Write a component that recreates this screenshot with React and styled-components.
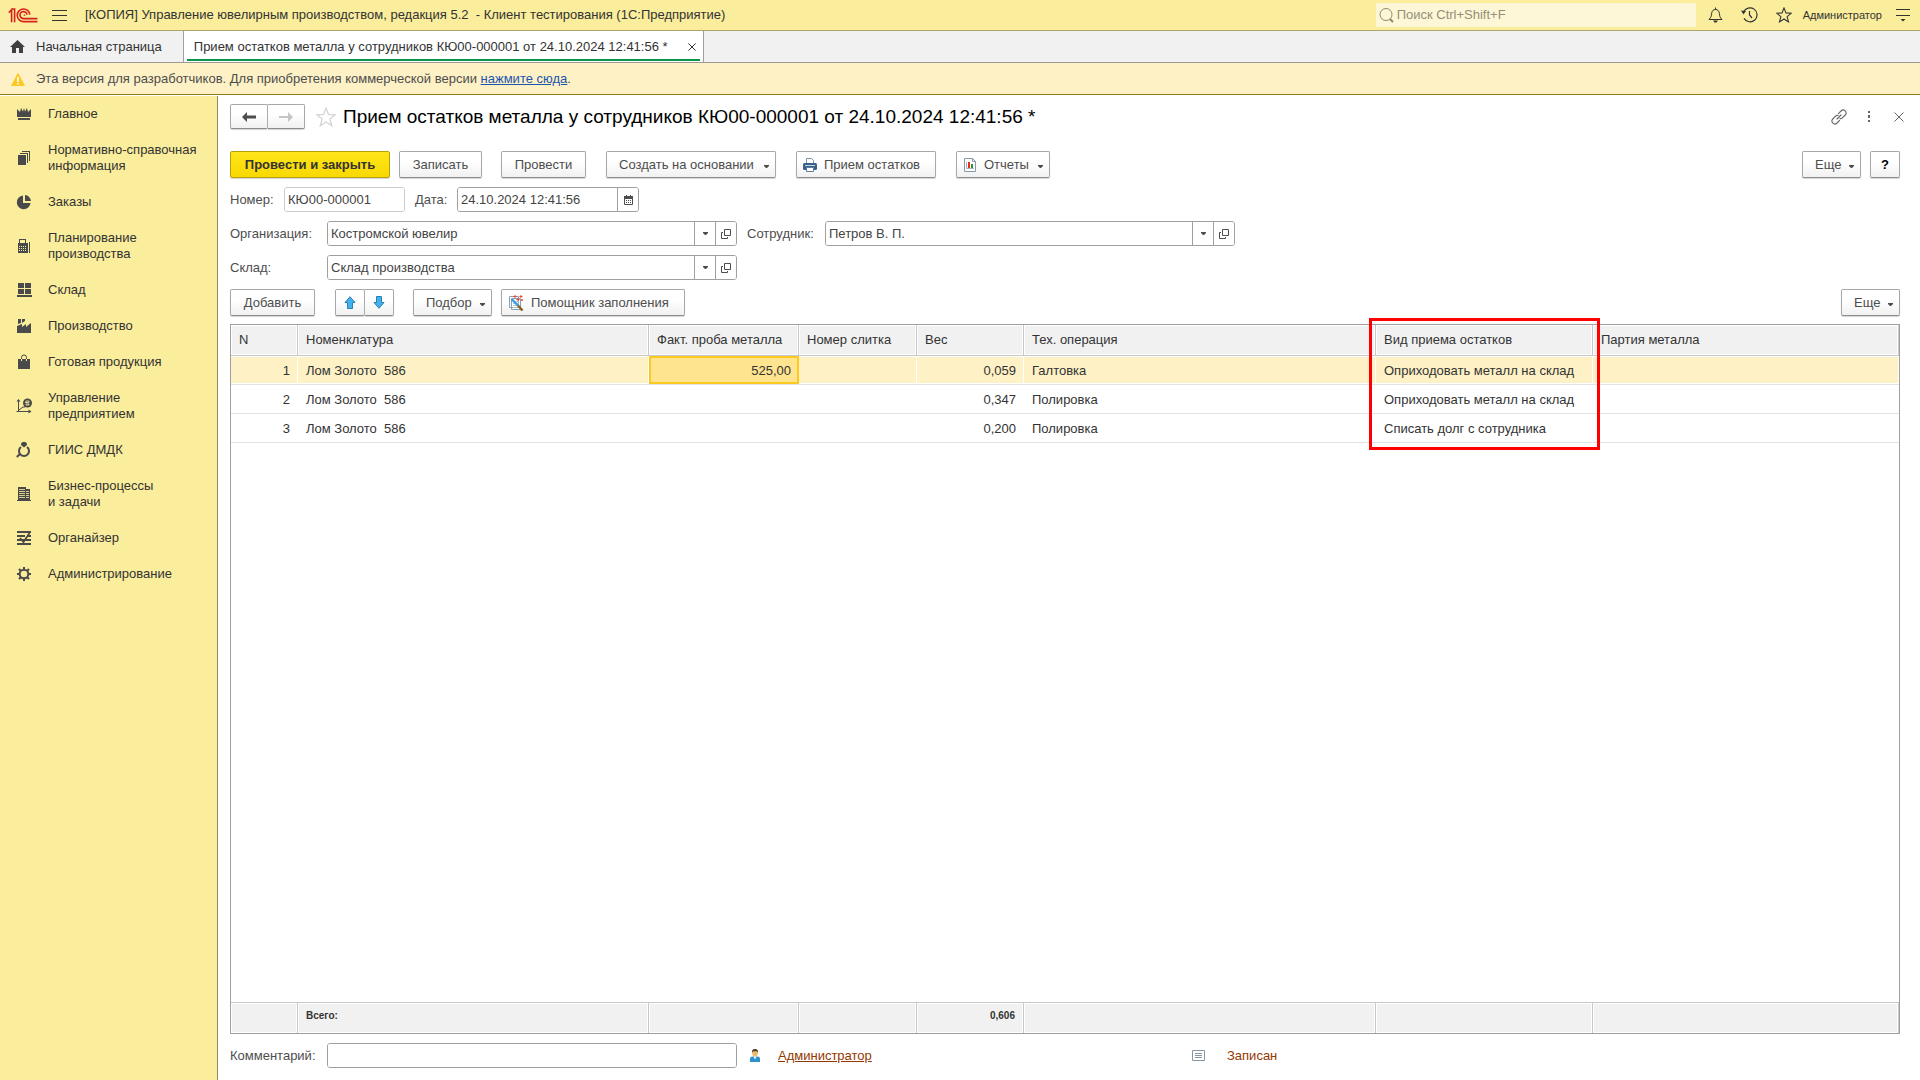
import React, { useState } from 'react';
import styled, { createGlobalStyle, css } from 'styled-components';


const GlobalStyle = createGlobalStyle`
    * {
        box-sizing: border-box;
    }
    body {
        margin: 0;
        background: #fff;
    }
    body, button, input {
        font-family: "Liberation Sans", Arial, sans-serif;
        font-size: 13px;
        line-height: 16px;
        color: #333;
    }
    svg {
        display: block;
        flex: none;
    }
`;

const Page = styled.div`
    display: flex;
    flex-direction: column;
    min-height: 100vh;
`;

const Header = styled.header`
    display: flex;
    align-items: center;
    height: 31px;
    padding: 0 4px 0 8px;
    background: #faed9c;
    border-bottom: 1px solid #aca46c;
`;

const IconButton = styled.button`
    display: flex;
    align-items: center;
    justify-content: center;
    width: ${props => props.$width || 34}px;
    height: 24px;
    padding: 0;
    border: 0;
    background: none;
    color: ${props => props.$color || '#333'};
    cursor: pointer;
`;

const AppTitle = styled.div`
    flex: 1;
    margin-left: 4px;
    white-space: pre;
`;

const Search = styled.label`
    display: flex;
    align-items: center;
    width: 320px;
    height: 24px;
    margin-right: 3px;
    padding-left: 3px;
    background: #fdf7d7;
    border-radius: 2px;
    color: #8f8a6c;
`;

const SearchInput = styled.input`
    flex: 1;
    min-width: 0;
    padding: 0 0 0 3px;
    border: 0;
    outline: 0;
    background: none;
    &::placeholder {
        color: #948f75;
        opacity: 1;
    }
`;

const UserName = styled.span`
    margin: 0 8px 0 2px;
    font-size: 11px;
`;

const Tabs = styled.nav`
    display: flex;
    height: 32px;
    background: #f1f1f1;
    border-bottom: 1px solid #9b9b93;
`;

const Tab = styled.div`
    display: flex;
    align-items: center;
    border-right: 1px solid #a0a0a0;
    ${props => props.$active ? css`
        padding: 0 3px;
        background: #fff;
    ` : css`
        padding: 0 21px 0 10px;
    `}
`;

const TabButton = styled.button`
    display: flex;
    align-items: center;
    gap: 11px;
    padding: 0;
    border: 0;
    background: none;
    cursor: pointer;
`;

const TabBody = styled.div`
    display: flex;
    align-items: center;
    gap: 16px;
    height: 29px;
    padding: 2px 0 0 7px;
    border-bottom: 2px solid #0a9649;
`;

const Notice = styled.div`
    display: flex;
    align-items: center;
    gap: 11px;
    height: 32px;
    padding-left: 11px;
    background: #fdf1c5;
    border-bottom: 1px solid #967d1a;
    color: #4d4d4d;
`;

const NoticeLink = styled.a`
    color: #1c55ae;
`;

const Workspace = styled.div`
    display: flex;
    flex: 1;
    padding-top: 1px;
`;

const Sidebar = styled.nav`
    width: 218px;
    flex: none;
    background: #faed9c;
    border-right: 1px solid #8f8a62;
`;

const MenuItem = styled.a`
    display: flex;
    align-items: center;
    gap: 16px;
    padding: 10px 0 10px 16px;
    color: #333;
    text-decoration: none;
    white-space: pre-line;
    &:hover {
        background: #fdf1c5;
    }
`;

const Form = styled.main`
    display: flex;
    flex: 1;
    flex-direction: column;
    min-width: 0;
    padding: 8px 20px 12px 12px;
`;

const TitleRow = styled.div`
    display: flex;
    align-items: center;
    height: 25px;
    margin: 0 -14px 22px 0;
`;

const Title = styled.h1`
    flex: 1;
    margin: 0;
    font-size: 19px;
    font-weight: 400;
    line-height: 24px;
    color: #000;
`;

const Toolbar = styled.div`
    display: flex;
    margin-bottom: ${props => props.$bottom}px;
`;

const Spacer = styled.div`
    flex: 1;
`;

const Button = styled.button`
    display: flex;
    align-items: center;
    justify-content: ${props => props.$menu || props.$icon ? 'flex-start' : 'center'};
    gap: 7px;
    height: 27px;
    min-width: ${props => props.$width || 30}px;
    margin-right: ${props => props.$gap || 0}px;
    padding: 0 6px 0 ${props => props.$menu && !props.$icon ? 12 : 6}px;
    background: linear-gradient(#fff 40%, #f1f1f1);
    border: 1px solid #a8a8a8;
    border-bottom-color: #8c8c8c;
    border-radius: 2px;
    box-shadow: 0 1px 1px #d5d5d5;
    color: #4d4d4d;
    white-space: nowrap;
    cursor: pointer;
    ${props => props.$primary && css`
        background: linear-gradient(#ffe61a, #f8d800);
        border-color: #b8a108;
        color: #333;
        font-weight: 700;
    `}
    ${props => props.$help && css`
        padding: 0;
        color: #000;
        font-weight: 700;
    `}
`;

const ButtonPair = styled.div`
    display: flex;
    margin-right: ${props => props.$gap}px;
    ${Button} {
        padding: 0;
        min-width: 0;
        width: ${props => props.$width}px;
        height: ${props => props.$height}px;
    }
    ${Button} + ${Button} {
        border-left: 0;
        border-radius: 0 2px 2px 0;
        width: ${props => props.$width - 1}px;
    }
`;

const FieldRow = styled.div`
    display: flex;
    align-items: center;
    margin-bottom: 9px;
`;

const Label = styled.label`
    flex: none;
    width: ${props => props.$width}px;
    color: #4d4d4d;
`;

const Field = styled.div`
    display: flex;
    width: ${props => props.$width}px;
    height: 25px;
    margin-right: 10px;
    border: 1px solid ${props => props.$readOnly ? '#cbcbcb' : '#a0a0a0'};
    border-radius: 3px;
    overflow: hidden;
`;

const Input = styled.input`
    flex: 1;
    min-width: 0;
    padding: 0 3px;
    border: 0;
    outline: 0;
    background: #fff;
    color: #444;
`;

const FieldButton = styled.button`
    display: flex;
    align-items: center;
    justify-content: center;
    width: 21px;
    padding: 0;
    border: 0;
    border-left: 1px solid #a0a0a0;
    background: #fff;
    color: #4d4d4d;
    cursor: pointer;
`;

const TableFrame = styled.div`
    display: grid;
    flex: 1;
    border: 1px solid #a0a0a0;
`;

const Table = styled.table`
    width: 100%;
    height: 100%;
    table-layout: fixed;
    border-collapse: separate;
    border-spacing: 0;
`;

const HeadCell = styled.th`
    position: relative;
    height: 31px;
    padding: 0 8px;
    background: #f1f1f1;
    border-right: 1px solid #c8c8c8;
    border-bottom: 1px solid #c8c8c8;
    box-shadow: inset 0 0 0 1px #fff;
    font-weight: 400;
    text-align: left;
    white-space: nowrap;
`;

const Cell = styled.td`
    height: 29px;
    padding: 2px 8px 0;
    border-bottom: 1px solid #e3e3e3;
    text-align: ${props => props.$right ? 'right' : 'left'};
    white-space: pre;
    ${props => props.$selected && css`
        background: #fdf1c5;
        box-shadow: inset -1px 0 #fff, inset 0 1px #fff, inset 0 -1px #fff;
    `}
    ${props => props.$current && css`
        background: #fee48f;
        box-shadow: inset 0 0 0 2px #fcc922;
    `}
`;

const FillerCell = styled.td`
    padding: 0;
`;

const FootCell = styled.td`
    height: 31px;
    padding: 0 8px 4px;
    background: #f1f1f1;
    border-top: 1px solid #c8c8c8;
    border-right: 1px solid #c8c8c8;
    box-shadow: inset 0 0 0 1px #fff;
    font-size: 10px;
    font-weight: 700;
    text-align: ${props => props.$right ? 'right' : 'left'};
`;

// Frame around the whole column, drawn over the rows
const Highlight = styled.div`
    position: absolute;
    z-index: 1;
    top: -7px;
    left: -7px;
    right: -8px;
    height: 132px;
    border: 3px solid #f00;
    pointer-events: none;
`;

const Footer = styled.footer`
    display: flex;
    align-items: center;
    padding-top: 9px;
`;

const FooterCell = styled.div`
    display: flex;
    align-items: center;
    gap: ${props => props.$gap}px;
    width: ${props => props.$width}px;
    padding-left: ${props => props.$left || 0}px;
    color: #943800;
`;

const FooterLink = styled.a`
    color: #943800;
`;

const Logo = () => (
    <svg width="30" height="15" viewBox="0 0 30 15" fill="none" stroke="#d8201c" strokeWidth="1.6">
        <path d="M0.8 4.6 3.6 1.8V14.2M3.2 1H6.6V14.2" />
        <path d="M21.8 6.6A6.3 6.3 0 1 0 15.6 13.6H29.4" />
        <path d="M19 6.8A3.5 3.5 0 1 0 15.8 10.6H29.4" />
        <path d="M16.4 6.6V7.8" />
    </svg>
);

const BurgerIcon = () => (
    <svg width="15" height="13" viewBox="0 0 15 13" stroke="currentColor">
        <path d="M0 1.5H15M0 6.5H15M0 11.5H15" />
    </svg>
);

const SearchIcon = () => (
    <svg width="15" height="15" viewBox="0 0 15 15" fill="none" stroke="currentColor">
        <circle cx="7" cy="6.5" r="6" />
        <path d="M11 11 14 14" strokeWidth="2" />
    </svg>
);

const BellIcon = () => (
    <svg width="15" height="16" viewBox="0 0 15 16" fill="none" stroke="currentColor">
        <path d="M1 12.5H14C11.5 10 11.8 9 11.4 6.5 11 3.8 9.8 2.5 7.5 2.5S4 3.8 3.6 6.5C3.2 9 3.5 10 1 12.5ZM7.5 0.5V2.5" />
        <path d="M5 13.5H10L8.5 15.5H6.5Z" fill="currentColor" stroke="none" />
    </svg>
);

const HistoryIcon = () => (
    <svg width="17" height="16" viewBox="0 0 17 16" fill="none" stroke="currentColor" strokeWidth="1.2">
        <path d="M2.6 5A7 7 0 1 1 3 11.4M8.5 4V8L11 11" />
        <path d="M0 3.5 5 4 2.4 7.4Z" fill="currentColor" stroke="none" />
    </svg>
);

const StarIcon = ({ size = 16 }) => (
    <svg width={size} height={size} viewBox="0 0 18 18" fill="none" stroke="currentColor" strokeWidth="1.2">
        <path d="M9 1 11.2 6.6 17.2 7 12.5 10.8 14.1 16.8 9 13.5 3.9 16.8 5.5 10.8 0.8 7 6.8 6.6Z" />
    </svg>
);

const SettingsIcon = () => (
    <svg width="14" height="14" viewBox="0 0 14 14">
        <path d="M0 1.5H14M0 7.5H14" stroke="currentColor" />
        <path d="M4.5 11H9.5L7 13.5Z" fill="currentColor" />
    </svg>
);

const HomeIcon = () => (
    <svg width="15" height="13" viewBox="0 0 15 13" fill="#404040">
        <path d="M7.5 0 15 7H13V13H9V8H6V13H2V7H0Z" />
    </svg>
);

const CloseIcon = ({ size = 10 }) => (
    <svg width={size} height={size} viewBox="0 0 10 10" stroke="currentColor" strokeWidth={10 / size}>
        <path d="M0.5 0.5 9.5 9.5M9.5 0.5 0.5 9.5" />
    </svg>
);

const WarningIcon = () => (
    <svg width="14" height="14" viewBox="0 0 14 14">
        <path d="M7 0.5 14 14H0Z" fill="#fcc922" />
        <path d="M7 5V10M7 11V12.5" stroke="#fff" strokeWidth="1.6" />
    </svg>
);

const BackIcon = () => (
    <svg width="14" height="10" viewBox="0 0 14 10" fill="currentColor">
        <path d="M5 0V3.5H14V6.5H5V10L0 5Z" />
    </svg>
);

const ForwardIcon = () => (
    <svg width="14" height="10" viewBox="0 0 14 10" fill="#c6c6c6">
        <path d="M9 0V4H0V6H9V10L14 5Z" />
    </svg>
);

const LinkIcon = () => (
    <svg width="16" height="16" viewBox="0 0 16 16" fill="none" stroke="currentColor" strokeLinecap="round" strokeWidth="1.1">
        <path d="M7.4 4.6 10 2A2.9 2.9 0 0 1 14.2 6L11.4 8.8A2.8 2.8 0 0 1 9 9.6" />
        <path d="M8.6 11.4 6 14A2.9 2.9 0 0 1 1.8 10L4.6 7.2A2.8 2.8 0 0 1 7 6.4M6 10 10 6" />
    </svg>
);

const DotsIcon = () => (
    <svg width="2" height="11" viewBox="0 0 2 11" fill="currentColor">
        <path d="M0 0H2V2H0ZM0 4H2V7H0ZM0 9H2V11H0Z" />
    </svg>
);

const Caret = ({ className }) => (
    <svg className={className} width="5" height="3" viewBox="0 0 5 3" fill="currentColor">
        <path d="M0 0H5V1L3 3H2L0 1Z" />
    </svg>
);

const ButtonCaret = styled(Caret)`
    margin: 4px 0 0 auto;
`;

const OpenIcon = () => (
    <svg width="10" height="10" viewBox="0 0 10 10" fill="none" stroke="currentColor">
        <path d="M3.5 0.5H9.5V6.5H3.5ZM2 3.5H0.5V9.5H6.5V8" />
    </svg>
);

const CalendarIcon = () => (
    <svg width="9" height="10" viewBox="0 0 9 10">
        <path d="M0.5 1.5H8.5V9.5H0.5Z" fill="#fff" stroke="currentColor" />
        <path d="M0 1H9V4H0ZM2 0H3V1H2ZM6 0H7V1H6Z" fill="currentColor" />
        <path d="M2 5.5H7.5M2 7.5H7.5" stroke="currentColor" strokeDasharray="1 1" />
    </svg>
);

const PrinterIcon = () => (
    <svg width="14" height="14" viewBox="0 0 14 14">
        <path d="M3.5 5.5V0.5H8.5L10.5 2.5V5.5" fill="#fff" stroke="#7d93a6" />
        <rect y="5" width="14" height="7" rx="1.5" fill="#38608a" />
        <path d="M2 7.5H12" stroke="#c6d6e4" />
        <path d="M3.5 9.5H10.5V13.5H3.5Z" fill="#fff" stroke="#5c7c9b" />
    </svg>
);

const ReportIcon = () => (
    <svg width="14" height="14" viewBox="0 0 14 14">
        <path d="M1.5 0.5H9.5L12.5 3.5V13.5H1.5Z" fill="#fff" stroke="#8799a8" />
        <path d="M9.5 0.5V3.5H12.5" fill="none" stroke="#8799a8" />
        <path d="M3.5 4V10.5H11" fill="none" stroke="#a9b5bf" />
        <path d="M5 4H7V10H5Z" fill="#f02a1c" />
        <path d="M8 6H10V10H8Z" fill="#1d9c2c" />
    </svg>
);

const ArrowUpIcon = () => (
    <svg width="12" height="13" viewBox="0 0 12 13" fill="#44b0ec" stroke="#2a7fb5">
        <path d="M6 0.7 11 6.5H8.5V12.5H3.5V6.5H1Z" />
    </svg>
);

const ArrowDownIcon = () => (
    <svg width="12" height="13" viewBox="0 0 12 13" fill="#44b0ec" stroke="#2a7fb5">
        <path d="M6 12.3 11 6.5H8.5V0.5H3.5V6.5H1Z" />
    </svg>
);

const WizardIcon = () => (
    <svg width="16" height="16" viewBox="0 0 16 16" fill="none">
        <path d="M1.5 1.5H10.5V12.5H1.5ZM3.5 3.5H12.5V14.5H3.5Z" fill="#fff" stroke="#8aa0b2" />
        <path d="M5 6.5H11M5 8.5H11M5 10.5H11M5 12.5H9" stroke="#b5c6d3" />
        <path d="M3.5 4 10 10.5" stroke="#3aa0e4" strokeWidth="2.4" />
        <path d="M10 10.5 14.5 15.5" stroke="#866018" strokeWidth="2.4" />
        <path d="M7 0V3M5.5 1.5H8.5M13 0V3M11.5 1.5H14.5M10 3V6M8.5 4.5H11.5M14 4V6M13 5H15" stroke="#f0452a" />
    </svg>
);

const PersonIcon = () => (
    <svg width="10" height="13" viewBox="0 0 10 13">
        <path d="M0 13V9.5Q0 7.5 2.5 7.5H7.5Q10 7.5 10 9.5V13Z" fill="#3191cc" />
        <path d="M3.5 7.5H6.5L5 10.5Z" fill="#fff" />
        <ellipse cx="5" cy="4" rx="2.8" ry="3.4" fill="#f0b967" />
        <path d="M2 4Q1.5 0 5 0T8 4L7 2.2H3Z" fill="#4a3a28" />
    </svg>
);

const RecordIcon = () => (
    <svg width="13" height="11" viewBox="0 0 13 11">
        <path d="M0.5 0.5H12.5V10.5H0.5Z" fill="#fff" stroke="#8796a5" />
        <path d="M3 3.5H10M3 5.5H10M3 7.5H10" stroke="#8796a5" />
    </svg>
);

const MenuIcon = ({ children }) => (
    <svg width="16" height="16" viewBox="0 0 16 16" fill="#4a4a4a">{children}</svg>
);

const menu = [
    {
        title: 'Главное',
        icon: <path d="M1 3 4 6 5 2 7 5.5 8 2 9 5.5 11 2 12 6 15 3V11H1ZM2 12H14V14H2Z" />,
    },
    {
        title: 'Нормативно-справочная\nинформация',
        icon: <path d="M2 5H10V15H2ZM4 3H12V13H11V4H4ZM6 1H14V11H13V2H6Z" />,
    },
    {
        title: 'Заказы',
        icon: <path d="M7 1.5V9H14.6A6.9 6.9 0 1 1 7 1.5ZM9 1A6.5 6.5 0 0 1 15 7H9Z" />,
    },
    {
        title: 'Планирование\nпроизводства',
        icon: (
            <>
                <path fillRule="evenodd" d="M3 1H10V5H12V15H2V5H3ZM4 2V5H9V2ZM13 4H14V15H13Z" />
                <path d="M3 8.5H11M3 10.5H11M3 12.5H11" stroke="#faed9c" strokeDasharray="1 1" />
            </>
        ),
    },
    {
        title: 'Склад',
        icon: <path d="M2 1H8V6H2ZM9 1H15V6H9ZM2 7H8V12H2ZM9 7H15V12H9ZM1 13H16V15H1Z" />,
    },
    {
        title: 'Производство',
        icon: <path d="M1 8 6 6V9L10 6V9L15 5V15H1ZM2 1H5V5L2 6ZM6 1H9V3L6 5Z" />,
    },
    {
        title: 'Готовая продукция',
        icon: (
            <>
                <path d="M2 5H14V15H2Z" />
                <path d="M5.5 7V3.5Q5.5 1 8 1T10.5 3.5V7" fill="none" stroke="#4a4a4a" />
                <path d="M5.5 5V7M10.5 5V7" stroke="#faed9c" />
            </>
        ),
    },
    {
        title: 'Управление\nпредприятием',
        icon: (
            <>
                <path d="M0.5 3.5 2.5 1 4.5 3.5ZM12.5 11.5 15.5 13.5 12.5 15.5Z" />
                <path d="M2.5 2V13.5H14M0.5 13.5H3M3 12 7 9 9 9" fill="none" stroke="#4a4a4a" />
                <circle cx="11.5" cy="5" r="4.5" />
                <path d="M10 3H13V4.5H10ZM10 6H13V7H10ZM9 4.5H10" fill="none" stroke="#faed9c" strokeWidth="0.8" />
            </>
        ),
    },
    {
        title: 'ГИИС ДМДК',
        icon: (
            <>
                <path d="M5 1.5 6.5 0H9.5L11 1.5V3L8 5.5 5 3Z" />
                <path d="M5 5A5 5 0 1 0 11 5M4.5 11.5 0.8 15" fill="none" stroke="#4a4a4a" strokeWidth="2" />
            </>
        ),
    },
    {
        title: 'Бизнес-процессы\nи задачи',
        icon: (
            <>
                <path d="M2 1H10V15H2ZM10 3H14V15H10ZM1 14H15V15H1Z" />
                <path d="M3 3.5H9M3 5.5H9M3 7.5H9M3 9.5H9M3 11.5H9M10 5.5H13M10 7.5H13M10 9.5H13M10 11.5H13" stroke="#faed9c" strokeWidth="0.8" />
            </>
        ),
    },
    {
        title: 'Органайзер',
        icon: (
            <>
                <path d="M1 1H15V3H1ZM1 5H9V7H1ZM12 5H15V7H12ZM1 9H15V11H1ZM1 13H15V15H1Z" />
                <path d="M4 8 7.5 12 13.5 3" fill="none" stroke="#4a4a4a" strokeWidth="1.8" />
            </>
        ),
    },
    {
        title: 'Администрирование',
        icon: (
            <>
                <circle cx="8" cy="8" r="4.3" fill="none" stroke="#4a4a4a" strokeWidth="2" />
                <path d="M8 1V4M8 12V15M1 8H4M12 8H15M3 3 5 5M11 11 13 13M13 3 11 5M5 11 3 13" stroke="#4a4a4a" strokeWidth="2" />
            </>
        ),
    },
];

const columns = [
    { key: 'n', title: 'N', width: 67, right: true },
    { key: 'item', title: 'Номенклатура', width: 351 },
    { key: 'assay', title: 'Факт. проба металла', width: 150, right: true },
    { key: 'ingot', title: 'Номер слитка', width: 118 },
    { key: 'weight', title: 'Вес', width: 107, right: true },
    { key: 'operation', title: 'Тех. операция', width: 352 },
    { key: 'kind', title: 'Вид приема остатков', width: 217, highlight: true },
    { key: 'batch', title: 'Партия металла' },
];

const rows = [
    { n: 1, item: 'Лом Золото  586', assay: '525,00', weight: '0,059', operation: 'Галтовка', kind: 'Оприходовать металл на склад' },
    { n: 2, item: 'Лом Золото  586', weight: '0,347', operation: 'Полировка', kind: 'Оприходовать металл на склад' },
    { n: 3, item: 'Лом Золото  586', weight: '0,200', operation: 'Полировка', kind: 'Списать долг с сотрудника' },
];

const totals = { item: 'Всего:', weight: '0,606' };

const documentTitle = 'Прием остатков металла у сотрудников КЮ00-000001 от 24.10.2024 12:41:56 *';

const ReferenceField = ({ id, label, labelWidth, value }) => (
    <>
        <Label htmlFor={id} $width={labelWidth}>{label}</Label>
        <Field $width={410}>
            <Input id={id} defaultValue={value} />
            <FieldButton aria-label="Выбрать"><Caret /></FieldButton>
            <FieldButton aria-label="Открыть"><OpenIcon /></FieldButton>
        </Field>
    </>
);

const ItemsTable = () => {
    const [current, setCurrent] = useState({ row: 0, column: 'assay' });

    return (
        <TableFrame>
            <Table>
                <colgroup>
                    {columns.map(({ key, width }) => <col key={key} width={width} />)}
                </colgroup>
                <thead>
                    <tr>
                        {columns.map(({ key, title, highlight }) => (
                            <HeadCell key={key}>
                                {title}
                                {highlight ? <Highlight /> : null}
                            </HeadCell>
                        ))}
                    </tr>
                </thead>
                <tbody>
                    {rows.map((row, index) => (
                        <tr key={row.n}>
                            {columns.map(({ key, right }) => (
                                <Cell
                                    key={key}
                                    $right={right}
                                    $selected={current.row === index}
                                    $current={current.row === index && current.column === key}
                                    onClick={() => setCurrent({ row: index, column: key })}
                                >
                                    {row[key]}
                                </Cell>
                            ))}
                        </tr>
                    ))}
                    <tr>
                        <FillerCell colSpan={columns.length} />
                    </tr>
                </tbody>
                <tfoot>
                    <tr>
                        {columns.map(({ key, right }) => (
                            <FootCell key={key} $right={right}>{totals[key]}</FootCell>
                        ))}
                    </tr>
                </tfoot>
            </Table>
        </TableFrame>
    );
};

const App = () => (
    <Page>
        <GlobalStyle />
        <Header>
            <Logo />
            <IconButton $width={43} aria-label="Меню"><BurgerIcon /></IconButton>
            <AppTitle>{'[КОПИЯ] Управление ювелирным производством, редакция 5.2  - Клиент тестирования (1С:Предприятие)'}</AppTitle>
            <Search>
                <SearchIcon />
                <SearchInput aria-label="Поиск" placeholder="Поиск Ctrl+Shift+F" />
            </Search>
            <IconButton aria-label="Уведомления"><BellIcon /></IconButton>
            <IconButton aria-label="История"><HistoryIcon /></IconButton>
            <IconButton aria-label="Избранное"><StarIcon /></IconButton>
            <UserName>Администратор</UserName>
            <IconButton $width={26} aria-label="Настройки"><SettingsIcon /></IconButton>
        </Header>
        <Tabs>
            <Tab>
                <TabButton><HomeIcon />Начальная страница</TabButton>
            </Tab>
            <Tab $active>
                <TabBody>
                    <TabButton>{documentTitle}</TabButton>
                    <IconButton $width={16} aria-label="Закрыть вкладку"><CloseIcon size={8} /></IconButton>
                </TabBody>
            </Tab>
        </Tabs>
        <Notice>
            <WarningIcon />
            <div>
                Эта версия для разработчиков. Для приобретения коммерческой версии <NoticeLink href="#buy">нажмите сюда</NoticeLink>.
            </div>
        </Notice>
        <Workspace>
            <Sidebar>
                {menu.map(({ title, icon }) => (
                    <MenuItem key={title} href="#section">
                        <MenuIcon>{icon}</MenuIcon>
                        {title}
                    </MenuItem>
                ))}
            </Sidebar>
            <Form>
                <TitleRow>
                    <ButtonPair $gap={4} $width={38} $height={25}>
                        <Button aria-label="Назад"><BackIcon /></Button>
                        <Button aria-label="Вперед"><ForwardIcon /></Button>
                    </ButtonPair>
                    <IconButton $color="#d5d5d5" aria-label="В избранное"><StarIcon size={20} /></IconButton>
                    <Title>{documentTitle}</Title>
                    <IconButton $width={30} $color="#666" aria-label="Ссылка"><LinkIcon /></IconButton>
                    <IconButton $width={30} $color="#666" aria-label="Действия"><DotsIcon /></IconButton>
                    <IconButton $width={30} $color="#666" aria-label="Закрыть"><CloseIcon /></IconButton>
                </TitleRow>
                <Toolbar $bottom={9}>
                    <Button $primary $width={160} $gap={9}>Провести и закрыть</Button>
                    <Button $width={83} $gap={19}>Записать</Button>
                    <Button $width={85} $gap={20}>Провести</Button>
                    <Button $menu $width={170} $gap={20}>Создать на основании<ButtonCaret /></Button>
                    <Button $icon $width={140} $gap={20}><PrinterIcon />Прием остатков</Button>
                    <Button $icon $menu $width={94}><ReportIcon />Отчеты<ButtonCaret /></Button>
                    <Spacer />
                    <Button $menu $width={59} $gap={9}>Еще<ButtonCaret /></Button>
                    <Button $help>?</Button>
                </Toolbar>
                <FieldRow>
                    <Label htmlFor="number" $width={54}>Номер:</Label>
                    <Field $width={121} $readOnly>
                        <Input id="number" value="КЮ00-000001" readOnly />
                    </Field>
                    <Label htmlFor="date" $width={42}>Дата:</Label>
                    <Field $width={182}>
                        <Input id="date" defaultValue="24.10.2024 12:41:56" />
                        <FieldButton aria-label="Календарь"><CalendarIcon /></FieldButton>
                    </Field>
                </FieldRow>
                <FieldRow>
                    <ReferenceField id="organization" label="Организация:" labelWidth={97} value="Костромской ювелир" />
                    <ReferenceField id="employee" label="Сотрудник:" labelWidth={78} value="Петров В. П." />
                </FieldRow>
                <FieldRow>
                    <ReferenceField id="warehouse" label="Склад:" labelWidth={97} value="Склад производства" />
                </FieldRow>
                <Toolbar $bottom={8}>
                    <Button $width={85} $gap={20}>Добавить</Button>
                    <ButtonPair $gap={19} $width={30} $height={27}>
                        <Button aria-label="Вверх"><ArrowUpIcon /></Button>
                        <Button aria-label="Вниз"><ArrowDownIcon /></Button>
                    </ButtonPair>
                    <Button $menu $width={79} $gap={9}>Подбор<ButtonCaret /></Button>
                    <Button $icon $width={184}><WizardIcon />Помощник заполнения</Button>
                    <Spacer />
                    <Button $menu $width={59}>Еще<ButtonCaret /></Button>
                </Toolbar>
                <ItemsTable />
                <Footer>
                    <Label htmlFor="comment" $width={97}>Комментарий:</Label>
                    <Field $width={410}>
                        <Input id="comment" />
                    </Field>
                    <FooterCell $gap={18} $width={445} $left={3}>
                        <PersonIcon />
                        <FooterLink href="#user">Администратор</FooterLink>
                    </FooterCell>
                    <FooterCell $gap={22}>
                        <RecordIcon />
                        Записан
                    </FooterCell>
                </Footer>
            </Form>
        </Workspace>
    </Page>
);

export default App;
